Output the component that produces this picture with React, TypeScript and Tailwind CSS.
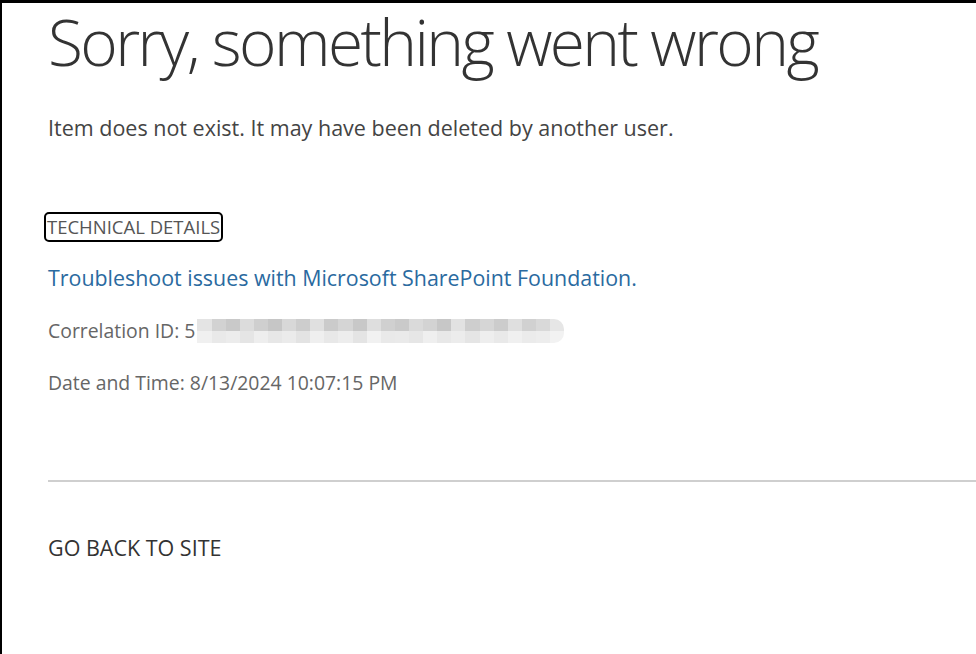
import React from 'react'

const blurTop = [
  'bg-[#e4e4e4]', 'bg-[#d2d2d2]', 'bg-[#c9c9c9]', 'bg-[#dcdcdc]', 'bg-[#cfcfcf]', 'bg-[#c6c6c6]',
  'bg-[#d8d8d8]', 'bg-[#cdcdcd]', 'bg-[#e0e0e0]', 'bg-[#cbcbcb]', 'bg-[#d5d5d5]', 'bg-[#c8c8c8]',
  'bg-[#dedede]', 'bg-[#d0d0d0]', 'bg-[#cacaca]', 'bg-[#dadada]', 'bg-[#d3d3d3]', 'bg-[#c7c7c7]',
  'bg-[#e2e2e2]', 'bg-[#cecece]', 'bg-[#d6d6d6]', 'bg-[#cccccc]', 'bg-[#dfdfdf]', 'bg-[#d1d1d1]',
  'bg-[#d9d9d9]', 'bg-[#e6e6e6]',
]
const blurBottom = [
  'bg-[#f0f0f0]', 'bg-[#e9e9e9]', 'bg-[#ececec]', 'bg-[#e5e5e5]', 'bg-[#eeeeee]', 'bg-[#e7e7e7]',
  'bg-[#ebebeb]', 'bg-[#e3e3e3]', 'bg-[#efefef]', 'bg-[#e8e8e8]', 'bg-[#ededed]', 'bg-[#e4e4e4]',
  'bg-[#f1f1f1]', 'bg-[#e9e9e9]', 'bg-[#eaeaea]', 'bg-[#e6e6e6]', 'bg-[#efefef]', 'bg-[#e8e8e8]',
  'bg-[#ececec]', 'bg-[#e5e5e5]', 'bg-[#eeeeee]', 'bg-[#e9e9e9]', 'bg-[#f0f0f0]', 'bg-[#ebebeb]',
  'bg-[#ededed]', 'bg-[#f2f2f2]',
]

// blurred-out part of the correlation id
function Redacted() {
  return (
    <span className="ml-[2px] inline-flex flex-col w-[367px] h-[24px] rounded-r-[10px] overflow-hidden">
      <span className="flex h-[12px]">
        {blurTop.map((c, i) => (
          <span key={i} className={`flex-1 ${c}`} />
        ))}
      </span>
      <span className="flex h-[12px]">
        {blurBottom.map((c, i) => (
          <span key={i} className={`flex-1 ${c}`} />
        ))}
      </span>
    </span>
  )
}

export default function App() {
  return (
    <div className="min-h-[654px] w-[976px] bg-white border-l-2 border-t-[3px] border-black font-['Open_Sans',sans-serif]">
      <div className="pl-[46px]">
        <h1 className="-mt-[2px] h-[82px] text-[64px] leading-[82px] font-light text-[#333] tracking-[-2.6px] whitespace-nowrap">
          Sorry, something went wrong
        </h1>

        <p className="mt-[30px] h-[30px] text-[21.5px] leading-[30px] text-[#444]">
          Item does not exist. It may have been deleted by another user.
        </p>

        <div className="mt-[69px]">
          <span className="flex items-center -ml-[4px] w-[179px] h-[30px] pl-[1px] border-2 border-black rounded-[5px] text-[18.5px] text-[#555] whitespace-nowrap">
            TECHNICAL DETAILS
          </span>
        </div>

        <p className="mt-[21px] h-[30px] text-[21.4px] leading-[30px] text-[#2a6aa0]">
          Troubleshoot issues with Microsoft SharePoint Foundation.
        </p>

        <div className="mt-[23px] h-[30px] flex items-center text-[19.4px] text-[#666]">
          <span>Correlation ID: 5</span>
          <Redacted />
        </div>

        <p className="mt-[22px] h-[30px] text-[19.4px] leading-[30px] text-[#666]">
          Date and Time: 8/13/2024 10:07:15 PM
        </p>

        <div className="mt-[82px] h-[2px] bg-[#cfcfcf]" />

        <p className="mt-[51px] h-[30px] text-[21.5px] leading-[30px] text-[#333]">
          GO BACK TO SITE
        </p>
      </div>
    </div>
  )
}
